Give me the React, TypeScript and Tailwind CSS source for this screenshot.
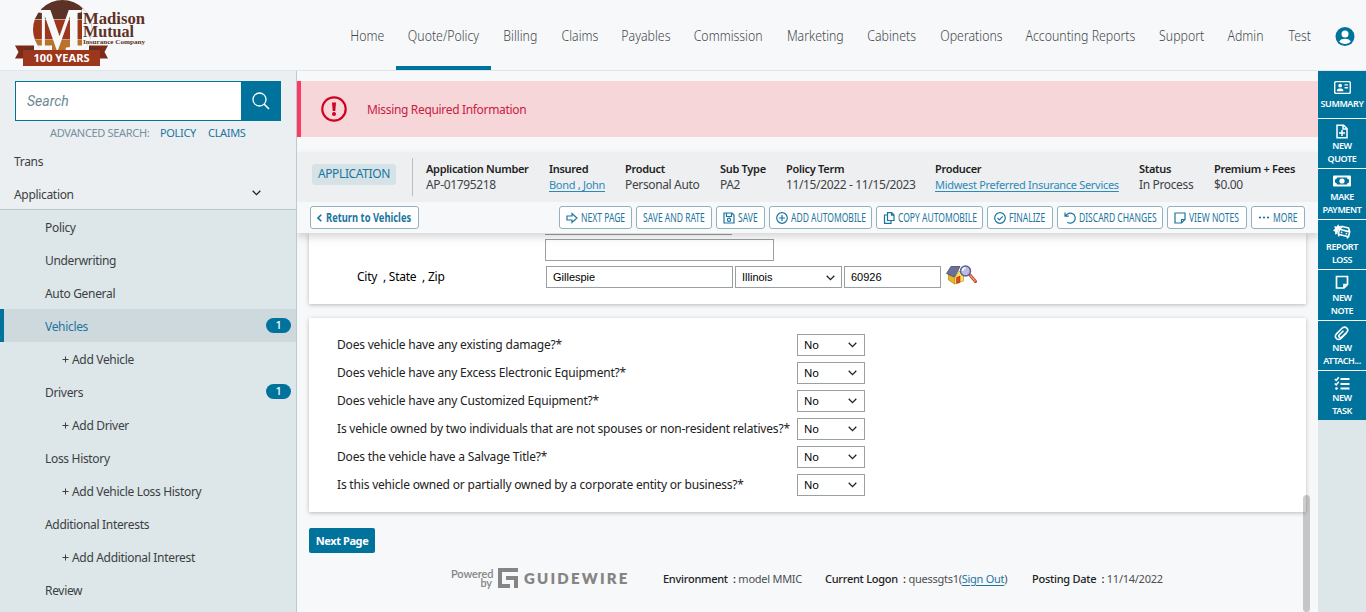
import React from 'react';
import { FaRegAddressCard } from 'react-icons/fa6';

const nav: [string, string][] = [
  ['Home', 'w-[58px]'],
  ['Quote/Policy', 'w-[95px]'],
  ['Billing', 'w-[58px]'],
  ['Claims', 'w-[61px]'],
  ['Payables', 'w-[72px]'],
  ['Commission', 'w-[93px]'],
  ['Marketing', 'w-[80px]'],
  ['Cabinets', 'w-[73px]'],
  ['Operations', 'w-[86px]'],
  ['Accounting Reports', 'w-[133px]'],
  ['Support', 'w-[69px]'],
  ['Admin', 'w-[60px]'],
  ['Test', 'w-[47px]'],
];

function Logo() {
  return (
    <svg width="150" height="70" viewBox="0 0 150 70" className="block">
      <defs>
        <clipPath id="disc"><circle cx="62.5" cy="29.5" r="29.5" /></clipPath>
      </defs>
      <g clipPath="url(#disc)">
        <rect x="30" y="0" width="65" height="20" fill="#5c3226" />
        <rect x="30" y="20" width="65" height="20" fill="#9c361d" />
        <rect x="30" y="40" width="65" height="20" fill="#b8722a" />
        <path d="M30 19.5H95M30 39.5H95" stroke="#c9a08c" strokeWidth="1" />
        <rect x="30" y="45.500" width="22" height="6" fill="#f7f8fa" />
        <rect x="71" y="45.500" width="22" height="6" fill="#f7f8fa" />
        <rect x="82" y="8.500" width="12" height="42" fill="#f7f8fa" />
      </g>
      <text x="37" y="49.500" fontFamily="Liberation Serif" fontWeight="700" fontSize="62" textLength="46" lengthAdjust="spacingAndGlyphs" fill="#f7f8fa">M</text>
      <path d="M15 45.500H34V58.500H15L18.500 52Z" fill="#7d2b18" />
      <path d="M108 45.500H89V58.500H108L104.500 52Z" fill="#7d2b18" />
      <path d="M23 50L34 46V50ZM100 50L89 46V50Z" fill="#5c3226" />
      <rect x="23" y="50" width="77" height="16" fill="#9c361d" />
      <text x="33.500" y="62" fontFamily="Noto Sans" fontWeight="700" fontSize="11" textLength="56" lengthAdjust="spacingAndGlyphs" fill="#fff">100 YEARS</text>
      <g fontFamily="Liberation Serif, serif" fontWeight="700" fill="#5c3226">
        <text x="83" y="24" fontSize="16" textLength="62" lengthAdjust="spacingAndGlyphs">Madison</text>
        <text x="83" y="36.500" fontSize="16" textLength="51" lengthAdjust="spacingAndGlyphs">Mutual</text>
        <text x="83" y="43.500" fontSize="7" textLength="62" lengthAdjust="spacingAndGlyphs">Insurance Company</text>
      </g>
    </svg>
  );
}

function Header() {
  return (
    <header className="flex h-[71px] shrink-0 border-b border-[#dde6e9]">
      <div className="w-[338px]"><Logo /></div>
      <nav className="flex text-[14px] font-light text-[#45484b]">
        {nav.map(([label, w]) => (
          <div key={label} className={`flex h-[70px] flex-none items-center justify-center whitespace-nowrap border-b-4 pt-1 ${w} ${label === 'Quote/Policy' ? 'border-[#00739d]' : 'border-transparent'}`}>
            <span className="scale-x-[0.88]">{label}</span>
          </div>
        ))}
      </nav>
      <svg className="mt-[27px] ml-3" width="20" height="20" viewBox="0 0 20 20">
        <circle cx="10" cy="9.500" r="9.500" fill="#00739d" />
        <circle cx="10" cy="7" r="3.500" fill="#fff" />
        <path d="M4.200 14.500C5.500 12.500 7.500 11.800 10 11.800S14.500 12.500 15.800 14.500C14.500 16 12.500 17 10 17S5.500 16 4.200 14.500Z" fill="#fff" />
      </svg>
    </header>
  );
}

type Item = { label: string; sub?: boolean; active?: boolean; count?: number };
const items: Item[] = [
  { label: 'Policy' },
  { label: 'Underwriting' },
  { label: 'Auto General' },
  { label: 'Vehicles', active: true, count: 1 },
  { label: 'Add Vehicle', sub: true },
  { label: 'Drivers', count: 1 },
  { label: 'Add Driver', sub: true },
  { label: 'Loss History' },
  { label: 'Add Vehicle Loss History', sub: true },
  { label: 'Additional Interests' },
  { label: 'Add Additional Interest', sub: true },
  { label: 'Review' },
];

function Chevron({ className = '' }: { className?: string }) {
  return (
    <svg className={className} width="9" height="6" viewBox="0 0 9 6" fill="none" stroke="#222" strokeWidth="1.300">
      <path d="M0.700 0.800L4.500 4.600L8.300 0.800" />
    </svg>
  );
}

function Sidebar() {
  return (
    <aside className="flex w-[297px] flex-none flex-col overflow-hidden border-r border-[#b9cbd1] bg-[#dde6e9] text-[12px] tracking-[-0.32px] text-[#3c3f42]">
      <div className="flex h-[139px] flex-none flex-col border-b border-[#b9cbd1] bg-[#eceff2] pt-[10px]">
        <div className="ml-[15px] flex h-10 w-[266px]">
          <div className="flex flex-1 items-center border border-r-0 border-[#00739d] bg-white pt-px pl-[11px] font-[Roboto] text-[14px] tracking-normal text-[#6b8894] italic">Search</div>
          <div className="flex w-10 items-center justify-center bg-[#00739d]">
            <svg width="18" height="18" viewBox="0 0 18 18" fill="none" stroke="#fff" strokeWidth="1.300">
              <circle cx="7.500" cy="7.500" r="6.500" /><path d="M12 12L17 17" strokeWidth="1.600" />
            </svg>
          </div>
        </div>
        <div className="flex h-6 items-center gap-3 pl-[50px] text-[11px] leading-6 text-[#7590a0]">
          <span className="w-[98px] whitespace-nowrap">ADVANCED SEARCH:</span>
          <span className="w-[36px] text-[#1b75a0]">POLICY</span>
          <span className="text-[#1b75a0]">CLAIMS</span>
        </div>
        <div className="flex h-[33px] items-center pt-[2px] pl-[14px]">Trans</div>
        <div className="flex h-[32px] items-center justify-between pr-[35px] pl-[14px]"><span className="pt-[3px]">Application</span><Chevron /></div>
      </div>
      {items.map((it) => (
        <div key={it.label} className={`flex h-[33px] flex-none items-center border-l-4 pr-[5px] ${it.sub ? 'pl-[58px]' : 'pl-[41px]'} ${it.active ? 'border-[#00739d] bg-[#ced9dd] text-[#1b75a0]' : 'border-transparent'}`}>
          {it.sub && (
            <svg className="mt-[2px] mr-[3px]" width="7" height="7" viewBox="0 0 7 7" stroke="#3c3f42"><path d="M3.500 0.500V6.500M0.500 3.500H6.500" /></svg>
          )}
          <span className="flex-1 pt-[2px] whitespace-nowrap">{it.label}</span>
          {it.count && <span className="flex h-[15px] w-[25px] items-center justify-center rounded-full bg-[#00739d] text-[11px] font-medium text-white">{it.count}</span>}
        </div>
      ))}
    </aside>
  );
}

const info: [string, string, string, boolean?][] = [
  ['Application Number', 'AP-01795218', 'w-[123px]'],
  ['Insured', 'Bond , John', 'w-[76px]', true],
  ['Product', 'Personal Auto', 'w-[95px]'],
  ['Sub Type', 'PA2', 'w-[66px]'],
  ['Policy Term', '11/15/2022 - 11/15/2023', 'w-[149px]'],
  ['Producer', 'Midwest Preferred Insurance Services', 'w-[204px]', true],
  ['Status', 'In Process', 'w-[75px]'],
  ['Premium + Fees', '$0.00', 'w-[90px]'],
];

const ico = { fill: 'none', stroke: '#1b75a0', strokeWidth: 1.2, viewBox: '0 0 12 12', width: 12, height: 12, className: 'flex-none' };
const actions: { label: string; w: string; tw: string; icon?: React.ReactNode }[] = [
  { label: 'NEXT PAGE', w: 'w-[73px]', tw: 'w-[44px]', icon: <svg {...ico}><path d="M1 4H6V1.500L11 6L6 10.500V8H1Z" /></svg> },
  { label: 'SAVE AND RATE', w: 'w-[76px]', tw: 'w-[62px]' },
  { label: 'SAVE', w: 'w-[49px]', tw: 'w-[20px]', icon: <svg {...ico}><path d="M1 1H9L11 3V11H1ZM3.500 1V4.500H8.500V1" /><circle cx="6" cy="7.800" r="1.600" /></svg> },
  { label: 'ADD AUTOMOBILE', w: 'w-[103px]', tw: 'w-[75px]', icon: <svg {...ico}><circle cx="6" cy="6" r="5.300" /><path d="M6 3V9M3 6H9" /></svg> },
  { label: 'COPY AUTOMOBILE', w: 'w-[107px]', tw: 'w-[78px]', icon: <svg {...ico}><path d="M4.500 0.700H8.700L11 3V8.500H4.500ZM8.500 1V3.200H11M4 3H1.500V11.300H8V9" /></svg> },
  { label: 'FINALIZE', w: 'w-[66px]', tw: 'w-[37px]', icon: <svg {...ico}><circle cx="6" cy="6" r="5.300" /><path d="M3.500 6L5.300 7.800L8.700 4.300" /></svg> },
  { label: 'DISCARD CHANGES', w: 'w-[106px]', tw: 'w-[78px]', icon: <svg {...ico}><path d="M1 0.500V4.200H4.800M1.200 4.200C3 1.400 6.300 0.300 8.800 1.800C11.400 3.400 11.900 6.800 10.200 9.200C8.600 11.400 5.500 11.800 3.300 10.200" /></svg> },
  { label: 'VIEW NOTES', w: 'w-[80px]', tw: 'w-[51px]', icon: <svg {...ico}><path d="M1 1H11V7.500L7.500 11H1ZM11 7.500H7.500V11" /></svg> },
  { label: 'MORE', w: 'w-[54px]', tw: 'w-[25px]', icon: <svg {...ico} stroke="none" fill="#1b75a0"><circle cx="2" cy="5.500" r="1.100" /><circle cx="6" cy="5.500" r="1.100" /><circle cx="10" cy="5.500" r="1.100" /></svg> },
];

const questions = [
  'Does vehicle have any existing damage?*',
  'Does vehicle have any Excess Electronic Equipment?*',
  'Does vehicle have any Customized Equipment?*',
  'Is vehicle owned by two individuals that are not spouses or non-resident relatives?*',
  'Does the vehicle have a Salvage Title?*',
  'Is this vehicle owned or partially owned by a corporate entity or business?*',
];

function House() {
  return (
    <svg width="32" height="20" viewBox="0 0 32 20">
      <path d="M2.500 9L8.500 13V19L2.500 15Z" fill="#e8b820" stroke="#a07a10" strokeWidth=".6" />
      <path d="M8.500 13L13 6L17.500 9V16L8.500 19Z" fill="#ffe05a" stroke="#b48a18" strokeWidth=".6" />
      <path d="M0.500 8.500L5 1.500H14L8.500 12Z" fill="#6a7096" stroke="#444a70" strokeWidth=".8" />
      <path d="M10.500 12.500L14 11V17.500L10.500 18.500Z" fill="#e0481c" stroke="#9c2a10" strokeWidth=".5" />
      <path d="M24 10L29.500 16.500" stroke="#b93a2c" strokeWidth="3" strokeLinecap="round" />
      <path d="M24 10L29.500 16.500" stroke="#f0a070" strokeWidth="1.200" />
      <circle cx="19.500" cy="6" r="5" fill="#b9bde4" stroke="#5b608f" strokeWidth="1.500" />
      <path d="M16.500 6C16.500 4 18 3 19.500 3" stroke="#fff" strokeWidth="1.500" fill="none" />
    </svg>
  );
}

const field = 'flex h-[22px] flex-none items-center border border-[#9a9fa1] bg-white px-[6px] pt-px font-[Liberation_Sans] text-[11px] text-black';
const card = 'mx-3 w-[997px] flex-none bg-white shadow-[0_1px_4px_rgba(0,0,0,0.25)]';

function Main() {
  return (
    <main className="relative flex w-[1021px] flex-none flex-col overflow-hidden bg-[#f7f8fa]">
      <div className="mt-[10px] flex h-14 flex-none items-center border-l-4 border-[#fb3c62] bg-[#f7d6d9] pl-5 text-[12px] text-[#c9203f]">
        <svg width="26" height="26" viewBox="0 0 26 26">
          <circle cx="13" cy="13" r="11.700" fill="none" stroke="#d0021f" strokeWidth="2.200" />
          <path d="M11 6.500H15L14.300 15H11.700Z" fill="#d0021f" /><circle cx="13" cy="18" r="2" fill="#d0021f" />
        </svg>
        <span className="ml-5 pt-[2px] tracking-[-0.33px]">Missing Required Information</span>
      </div>
      <section className="z-10 mt-[15px] h-[81px] flex-none bg-[#f7f8fa] shadow-[0_4px_8px_rgba(0,0,0,0.16)]">
        <div className="flex h-[50px] items-center bg-[#eeeff1] pl-[15px] text-[12px] tracking-[-0.36px]">
          <div className="mt-[-6px] flex h-[21px] w-[84px] items-center justify-center rounded-[3px] bg-[#d5e3e7] text-[12px] text-[#1b75a0]">APPLICATION</div>
          <div className="mr-[13px] ml-4 h-[38px] w-px bg-[#b9bec1]" />
          {info.map(([a, b, w, link]) => (
            <div key={a} className={`flex flex-none flex-col whitespace-nowrap leading-4 ${w}`}>
              <span className="text-[11px] font-semibold tracking-[-0.3px] text-[#222]">{a}</span>
              <span className={link ? 'text-[11px] tracking-[-0.3px] text-[#2d8ab8] underline underline-offset-2' : 'text-[#3f4346]'}>{b}</span>
            </div>
          ))}
        </div>
        <div className="flex gap-1 pt-1 pl-[13px] text-[#1b75a0]">
          <div className="mr-[136px] flex h-[23px] w-[109px] items-center gap-1 whitespace-nowrap rounded-[3px] border border-[#93b1bd] bg-white pl-[6px] text-[12px] font-bold">
            <svg className="flex-none" width="5" height="8" viewBox="0 0 5 8" fill="none" stroke="#1b75a0" strokeWidth="1.600"><path d="M4.300 0.700L1 4L4.300 7.300" /></svg>
            <span className="w-[86px]"><span className="inline-block origin-left scale-x-[0.78]">Return to Vehicles</span></span>
          </div>
          {actions.map((a) => (
            <div key={a.label} className={`flex h-[23px] flex-none items-center justify-center gap-[3px] whitespace-nowrap rounded-[3px] border border-[#93b1bd] bg-white text-[12px] ${a.w}`}>
              {a.icon}
              <span className={`flex-none ${a.tw}`}><span className="inline-block origin-left scale-x-[0.71]">{a.label}</span></span>
            </div>
          ))}
        </div>
      </section>
      <section className={`${card} h-[71px] text-[12px]`}>
        <div className="ml-[236px] h-[2px] w-[187px] border-b border-[#9a9fa1]" />
        <div className="mt-[4px] ml-[236px]"><div className={`${field} w-[229px]`} /></div>
        <div className="mt-[5px] flex items-center gap-[2px]">
          <span className="w-[186px] pl-[48px] tracking-[-0.24px] whitespace-pre">City  , State  , Zip</span>
          <div className={`${field} ml-[49px] w-[187px]`}>Gillespie</div>
          <div className={`${field} w-[107px] justify-between`}>Illinois<Chevron /></div>
          <div className={`${field} w-[97px]`}>60926</div>
          <span className="-mt-1 ml-[3px]"><House /></span>
        </div>
      </section>
      <section className={`${card} mt-[14px] h-[194px] pt-4 text-[12px] text-[#222]`}>
        {questions.map((q) => (
          <div key={q} className="mb-[6px] flex h-[22px] items-center pl-7">
            <span className="w-[460px] flex-none tracking-[-0.19px] whitespace-nowrap">{q}</span>
            <div className="flex h-[22px] w-[68px] items-center justify-between border border-[#9a9fa1] pr-[7px] pl-[6px] text-[11px] text-black"><span className="pt-px">No</span><Chevron /></div>
          </div>
        ))}
      </section>
      <div className="mt-4 ml-3 flex h-[25px] w-[66px] flex-none items-center justify-center rounded-[2px] bg-[#00739d] pt-px text-[11px] font-bold tracking-[-0.4px] whitespace-nowrap text-white">Next Page</div>
      <footer className="mt-[13px] flex h-6 flex-none items-center pl-[154px] text-[11px] tracking-[-0.26px] text-[#4b4f52]">
        <div className="w-[41px] flex-none text-right font-[Lato] text-[11px] leading-[9px] font-semibold tracking-[-0.1px] text-[#858585]">Powered<br />by</div>
        <svg className="ml-[6px] flex-none" width="20" height="20" viewBox="0 0 20 20" fill="#858585"><path d="M0 0H20V4H4V16H12V20H0ZM8 8H20V20H16V12H8Z" /></svg>
        <span className="ml-[6px] w-[139px] flex-none font-[Lato] text-[15px] font-extrabold tracking-[2.200px] text-[#858585]">GUIDEWIRE</span>
        <span className="w-[162px] pt-[2px] whitespace-nowrap"><b className="font-medium text-[#222]">Environment&nbsp; :</b> model MMIC</span>
        <span className="w-[207px] pt-[2px] whitespace-nowrap"><b className="font-medium text-[#222]">Current Logon&nbsp; :</b> quessgts1(<span className="text-[#1b75a0] underline underline-offset-2">Sign Out</span>)</span>
        <span className="pt-[2px] whitespace-nowrap"><b className="font-medium text-[#222]">Posting Date&nbsp; :</b> 11/14/2022</span>
      </footer>
      <div className="absolute right-[8px] bottom-0 z-20 h-[117px] w-[7px] rounded-full bg-black/20" />
    </main>
  );
}

const ri = { fill: 'none', stroke: '#fff', strokeWidth: 1.7, width: 16, height: 15, viewBox: '0 0 16 15' };
const rail: { h: string; lines: string[]; icon: React.ReactNode }[] = [
  { h: 'h-[48px] pt-[10px]', lines: ['SUMMARY'], icon: <span className="-mt-[3px]"><FaRegAddressCard size={17} /></span> },
  { h: 'h-[50px] pt-[4px]', lines: ['NEW', 'QUOTE'], icon: <svg {...ri}><path d="M3 1.200H9.500L13 4.500V13.800H3ZM9 1.500V5H13M8 6V12M5 9H11" strokeWidth="1.500" /></svg> },
  { h: 'h-[51px] pt-[5px]', lines: ['MAKE', 'PAYMENT'], icon: <svg className="-mt-[2px]" width="18" height="15" viewBox="0 0 18 15"><rect y="1.500" width="18" height="11" rx="1" fill="#fff" /><path d="M4 3.500H14C14 4.500 15 5.500 16 5.500V8.500C15 8.500 14 9.500 14 10.500H4C4 9.500 3 8.500 2 8.500V5.500C3 5.500 4 4.500 4 3.500Z" fill="#00739d" /><circle cx="9" cy="7" r="2.600" fill="#fff" /></svg> },
  { h: 'h-[50px] pt-[4px]', lines: ['REPORT', 'LOSS'], icon: <svg className="-mt-[2px]" width="18" height="15" viewBox="0 0 18 15"><path d="M8.500 1.500L6.500 2.200L5 0.300L4 2.500L1.200 2.200L2 4.800L0 6.500L2.200 7.800L2 10.500L4.200 9.700L5.500 6Z" fill="#fff" /><g transform="rotate(14 11 8)" fill="none" stroke="#fff" strokeWidth="1.600" strokeLinejoin="round"><path d="M6 6.500L8 3H14.500L16.500 6.500V11.500H6ZM6 6.500H16.500" /><path d="M8 9H9.500M13 9H14.500M6.800 11.500V13.500M15.700 11.500V13.500" /></g></svg> },
  { h: 'h-[51px] pt-[5px]', lines: ['NEW', 'NOTE'], icon: <svg {...ri} className="-mt-[2px]"><path d="M2.500 1.500H13.500V9.500L10 13H2.500ZM13.500 9.500H10V13" /></svg> },
  { h: 'h-[50px] pt-[4px]', lines: ['NEW', 'ATTACH...'], icon: <svg {...ri} strokeWidth={1.6}><path d="M12.500 7L7.500 12C6 13.800 3.500 13.800 2.300 12.400C1 11 1.300 9 2.700 7.600L8 2.300C9.500 0.800 11.500 0.800 12.700 2S14 5 12.700 6.300L7.800 11C7 11.800 5.800 11.800 5.200 11.100C4.600 10.400 4.700 9.400 5.400 8.700L9.500 4.700" /></svg> },
  { h: 'h-[49px] pt-[4px]', lines: ['NEW', 'TASK'], icon: <svg {...ri}><path d="M6.500 3H15.500M6.500 8H15.500M6.500 12.500H15.500" strokeWidth="1.900" /><path d="M0.800 3L2.200 4.400L4.800 1.200M0.800 7.500L2.200 8.900L4.800 5.800" strokeWidth="1.500" /><circle cx="2.500" cy="12.500" r="1.300" fill="#fff" stroke="none" /></svg> },
];

export default function App() {
  return (
    <div className="flex h-[612px] w-[1366px] flex-col overflow-hidden bg-[#f7f8fa] font-['Noto_Sans',sans-serif]">
      <Header />
      <div className="flex h-[541px]">
        <Sidebar />
        <Main />
        <aside className="w-12 flex-none bg-[#dde6e9] text-center text-[9px] leading-[13px] font-semibold tracking-[-0.4px] text-white">
          {rail.map((r, i) => (
            <div key={r.lines.join()} className={`flex flex-col items-center bg-[#00739d] ${i < 6 ? 'border-b border-white' : ''} ${r.h}`}>
              <span className="flex h-[16px] items-center">{r.icon}</span>
              {r.lines.map((l) => <span key={l} className="whitespace-nowrap">{l}</span>)}
            </div>
          ))}
        </aside>
      </div>
    </div>
  );
}
